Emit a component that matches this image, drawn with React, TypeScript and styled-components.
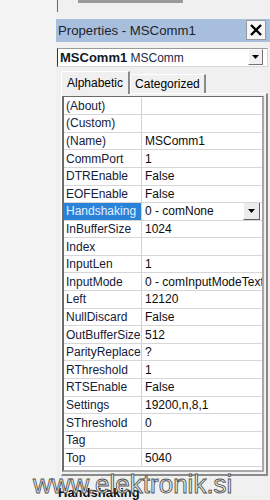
import styled, { createGlobalStyle } from "styled-components";

const GlobalStyle = createGlobalStyle`
  html, body {
    margin: 0;
    padding: 0;
    background: #f4f4f4;
    font-family: "Liberation Sans", Arial, sans-serif;
  }
`;

const rows: [string, string][] = [
  ["(About)", ""],
  ["(Custom)", ""],
  ["(Name)", "MSComm1"],
  ["CommPort", "1"],
  ["DTREnable", "False"],
  ["EOFEnable", "False"],
  ["Handshaking", "0 - comNone"],
  ["InBufferSize", "1024"],
  ["Index", ""],
  ["InputLen", "1"],
  ["InputMode", "0 - comInputModeText"],
  ["Left", "12120"],
  ["NullDiscard", "False"],
  ["OutBufferSize", "512"],
  ["ParityReplace", "?"],
  ["RThreshold", "1"],
  ["RTSEnable", "False"],
  ["Settings", "19200,n,8,1"],
  ["SThreshold", "0"],
  ["Tag", ""],
  ["Top", "5040"],
];

const selected = "Handshaking";

const Arrow = () => (
  <svg width="7" height="4" viewBox="0 0 7 4">
    <path d="M0 0 H7 L3.5 4 Z" fill="#000" />
  </svg>
);

const App = () => {
  return (
    <Page>
      <GlobalStyle />
      <Panel>
        <TopFrame>
          <TopBar />
        </TopFrame>
        <TitleBar>
          <Title>Properties - MSComm1</Title>
          <CloseButton>
            <svg width="12" height="12" viewBox="0 0 12 12">
              <path d="M1 1 L11 11 M11 1 L1 11" stroke="#000" strokeWidth="2.4" />
            </svg>
          </CloseButton>
        </TitleBar>
        <ObjectCombo>
          <ComboText>
            <b>MSComm1</b> <span>MSComm</span>
          </ComboText>
          <DropButton>
            <Arrow />
          </DropButton>
        </ObjectCombo>
        <Tabs>
          <Tab $active>Alphabetic</Tab>
          <Tab>Categorized</Tab>
        </Tabs>
        <TabPanel>
          <Grid>
            {rows.map(([name, value]) => (
              <Row key={name}>
                <NameCell $selected={name === selected}>{name}</NameCell>
                <ValueCell>
                  <ValueText>{value}</ValueText>
                  {name === selected && (
                    <CellDrop>
                      <Arrow />
                    </CellDrop>
                  )}
                </ValueCell>
              </Row>
            ))}
            <Filler />
          </Grid>
        </TabPanel>
        <Footer>Handshaking</Footer>
      </Panel>
      <Watermark>www.elektronik.si</Watermark>
    </Page>
  );
};

export default App;

const Page = styled.div`
  position: relative;
  width: 270px;
  height: 500px;
  overflow: hidden;
  display: flex;
  padding-left: 56px;
  box-sizing: border-box;
`;

const Panel = styled.div`
  width: 214px;
  display: flex;
  flex-direction: column;
  background: #f0f0f0;
`;

const TopFrame = styled.div`
  height: 12px;
  margin-left: 1px;
  border-left: 1px solid #6a6a6a;
  padding-left: 20px;
`;

const TopBar = styled.div`
  width: 105px;
  height: 3px;
  background: #9a9a9a;
`;

const TitleBar = styled.div`
  margin-top: 7px;
  height: 23px;
  background: #a7bfdc;
  display: flex;
  align-items: center;
  justify-content: space-between;
  padding: 0 4px 0 2px;
`;

const Title = styled.span`
  font-size: 13.2px;
  color: #1c2430;
`;

const CloseButton = styled.div`
  width: 18px;
  height: 18px;
  background: #f6f6f6;
  border: 1px solid #9a9a9a;
  display: flex;
  align-items: center;
  justify-content: center;
`;

const ObjectCombo = styled.div`
  margin: 6px 2px 0 1px;
  height: 17px;
  background: #fff;
  border-top: 1px solid #9a9a9a;
  border-left: 1px solid #333;
  border-right: 1px solid #d8d8d8;
  border-bottom: 1px solid #d8d8d8;
  display: flex;
  align-items: center;
  justify-content: space-between;
  padding: 0 4px 0 2px;
`;

const ComboText = styled.div`
  font-size: 12px;
  color: #000;
  white-space: nowrap;
  b {
    font-size: 13px;
    color: #101828;
  }
  span {
    font-size: 12px;
    color: #1a2a4a;
  }
`;

const DropButton = styled.div`
  width: 13px;
  height: 14px;
  background: #f0f0f0;
  border-top: 1px solid #fff;
  border-left: 1px solid #fff;
  border-right: 1px solid #707070;
  border-bottom: 1px solid #707070;
  display: flex;
  align-items: center;
  justify-content: center;
`;

const Tabs = styled.div`
  margin: 4px 0 0 5px;
  display: flex;
  align-items: flex-end;
  height: 22px;
  position: relative;
  z-index: 1;
`;

const Tab = styled.div<{ $active?: boolean }>`
  height: ${(p) => (p.$active ? "23px" : "19px")};
  margin-bottom: ${(p) => (p.$active ? "-1px" : "0")};
  padding: 0 ${(p) => (p.$active ? "5px" : "4px")};
  font-size: 12px;
  color: #000;
  background: #f0f0f0;
  border-top: 1px solid #fff;
  border-left: 1px solid #fff;
  border-right: 2px solid #8a8a8a;
  box-sizing: border-box;
  display: flex;
  align-items: center;
`;

const TabPanel = styled.div`
  margin: 0 2px 0 5px;
  border-top: 1px solid #fff;
  border-left: 1px solid #fff;
  border-right: 2px solid #8a8a8a;
  border-bottom: 2px solid #8a8a8a;
  padding: 2px 2px 2px 0;
`;

const Grid = styled.div`
  background: #fff;
  border-top: 1px solid #6a6a6a;
  border-left: 2px solid #6a6a6a;
  border-right: 2px solid #a8a8a8;
  border-bottom: 2px solid #a8a8a8;
  padding-top: 1px;
  display: flex;
  flex-direction: column;
`;

const Row = styled.div`
  display: grid;
  grid-template-columns: 78px 1fr;
  height: 17.6px;
  box-sizing: border-box;
  border-bottom: 1px solid #d6d6d6;
  font-size: 12px;
`;

const NameCell = styled.div<{ $selected?: boolean }>`
  padding-left: 2px;
  display: flex;
  align-items: center;
  white-space: nowrap;
  overflow: hidden;
  border-right: 1px solid #d0d0d0;
  background: ${(p) => (p.$selected ? "#2b83d9" : "#fff")};
  color: ${(p) => (p.$selected ? "#e4efff" : "#15203a")};
`;

const ValueCell = styled.div`
  position: relative;
  display: flex;
  align-items: center;
  padding-left: 3px;
  overflow: hidden;
`;

const ValueText = styled.span`
  white-space: nowrap;
  color: #0c0c0c;
`;

const CellDrop = styled.div`
  position: absolute;
  right: 2px;
  top: -1px;
  width: 17px;
  height: 18px;
  box-sizing: border-box;
  background: #ececec;
  border-top: 1px solid #fff;
  border-left: 1px solid #fff;
  border-right: 1px solid #606060;
  border-bottom: 1px solid #606060;
  display: flex;
  align-items: center;
  justify-content: center;
`;

const Filler = styled.div`
  height: 3px;
`;

const Footer = styled.div`
  margin: 9px 0 0 2px;
  font-size: 13px;
  font-weight: bold;
  color: #101010;
`;

const Watermark = styled.div`
  position: absolute;
  left: 33px;
  top: 469px;
  font-size: 26px;
  font-family: "Liberation Sans", Arial, sans-serif;
  color: #ededed;
  -webkit-text-stroke: 0.9px #555;
  white-space: nowrap;
  pointer-events: none;
`;
